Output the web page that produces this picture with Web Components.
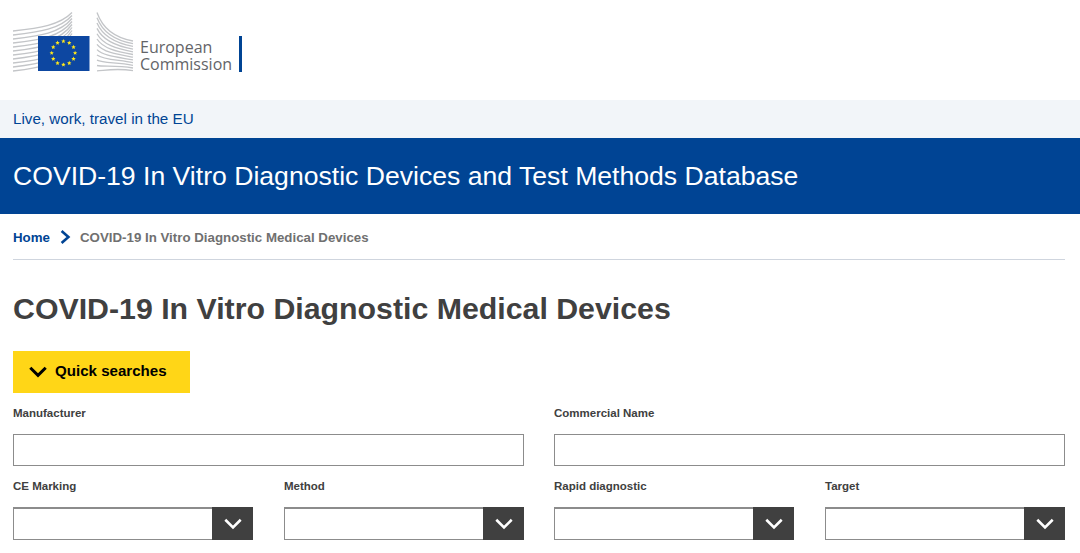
<!DOCTYPE html>
<html>
<head>
<meta charset="utf-8">
<style>
    html, body { margin: 0; padding: 0; background: #fff; overflow: hidden; }
    body { font-family: "Liberation Sans", Arial, sans-serif; color: #404040; }
</style>
</head>
<body>
<ec-header></ec-header>
<ec-topbar>Live, work, travel in the EU</ec-topbar>
<ec-banner>COVID-19 In Vitro Diagnostic Devices and Test Methods Database</ec-banner>
<ec-breadcrumb current="COVID-19 In Vitro Diagnostic Medical Devices">Home</ec-breadcrumb>
<ec-search>
    <ec-field slot="manufacturer" label="Manufacturer"></ec-field>
    <ec-field slot="commercial" label="Commercial Name"></ec-field>
    <ec-field slot="ce" label="CE Marking" type="select"></ec-field>
    <ec-field slot="method" label="Method" type="select"></ec-field>
    <ec-field slot="rapid" label="Rapid diagnostic" type="select"></ec-field>
    <ec-field slot="target" label="Target" type="select"></ec-field>
</ec-search>

<script>
const chevron = (color, width) => `<svg viewBox="0 0 18 12" width="18" height="12" aria-hidden="true"><path d="M1.3 1.8 9 9.4l7.7-7.6" fill="none" stroke="${color}" stroke-width="${width}"/></svg>`

function starPoints(cx, cy, r) {
    const pts = []
    for (let i = 0; i < 10; i++) {
        const a = -Math.PI / 2 + i * Math.PI / 5
        const d = i % 2 ? r * 0.45 : r
        pts.push((cx + d * Math.cos(a)).toFixed(2) + ',' + (cy + d * Math.sin(a)).toFixed(2))
    }
    return pts.join(' ')
}

function logoSvg() {
    let lines = ''
    // left wing, fans out to the top right behind the flag
    for (let i = 0; i < 11; i++) {
        const y0 = 31 + i * 4
        const y1 = 12.5 + i * 3
        lines += `<path d="M13 ${y0}C40 ${y0 - 3} 60 ${y0 - 6} 72 ${y1}"/>`
    }
    // right wing
    for (let i = 0; i < 12; i++) {
        const y0 = 12.5 + i * 5.3
        const y1 = 41 + i * 2.7
        lines += `<path d="M97 ${y0}C103 ${y0 + (y1 - y0) * 0.6} 116 ${y1 - 3} 133 ${y1}"/>`
    }
    let stars = ''
    for (let i = 0; i < 12; i++) {
        const a = i * Math.PI / 6
        stars += `<polygon points="${starPoints(63.4 + 11.7 * Math.sin(a), 53 - 11.7 * Math.cos(a), 2.3)}"/>`
    }
    return `<svg viewBox="0 0 140 84" width="140" height="84" aria-hidden="true">
        <g fill="none" stroke="#c3c5c8" stroke-width="1.3">${lines}</g>
        <rect x="38" y="36" width="51.5" height="35" fill="#0d47a1"/>
        <g fill="#ffe81a">${stars}</g>
    </svg>`
}

const headerPage = document.createElement('template')
headerPage.innerHTML = `
<style>
    :host { display: block; height: 100px; background: #fff; }
    .logo { display: flex; align-items: flex-start; }
    svg { display: block; }
    .name {
        margin-top: 36px;
        padding: 3px 7px 0 0;
        box-sizing: border-box;
        height: 36px;
        border-right: 3px solid #004494;
        font: 16px/17px "Open Sans", sans-serif;
        color: #636468;
    }
</style>
<div class="logo"><span class="mark"></span><div class="name">European<br>Commission</div></div>
`
class EcHeader extends HTMLElement {
    constructor() {
        super()
        this.attachShadow({ mode: "open" })
        this.shadowRoot.appendChild(headerPage.content.cloneNode(true))
        this.shadowRoot.querySelector('.mark').innerHTML = logoSvg()
    }
}

const topbarPage = document.createElement('template')
topbarPage.innerHTML = `
<style>
    :host {
        display: flex;
        align-items: center;
        height: 38px;
        padding: 0 13px 1px;
        box-sizing: border-box;
        background: #f2f5f9;
        color: #004494;
        font-size: 15.2px;
    }
</style>
<slot></slot>
`
class EcTopbar extends HTMLElement {
    constructor() {
        super()
        this.attachShadow({ mode: "open" })
        this.shadowRoot.appendChild(topbarPage.content.cloneNode(true))
    }
}

const bannerPage = document.createElement('template')
bannerPage.innerHTML = `
<style>
    :host {
        display: flex;
        align-items: center;
        height: 76px;
        padding: 0 13px;
        background: #004494;
        color: #fff;
        font-size: 26.6px;
    }
</style>
<slot></slot>
`
class EcBanner extends HTMLElement {
    constructor() {
        super()
        this.attachShadow({ mode: "open" })
        this.shadowRoot.appendChild(bannerPage.content.cloneNode(true))
    }
}

const breadcrumbPage = document.createElement('template')
breadcrumbPage.innerHTML = `
<style>
    :host { display: block; padding: 0 15px 0 13px; font-size: 13.3px; font-weight: bold; }
    .row {
        display: flex;
        align-items: center;
        padding-top: 1px;
        box-sizing: border-box;
        height: 46px;
        border-bottom: 1px solid #cfd5de;
    }
    .home { color: #004494; }
    svg { display: block; margin: 0 9px 0 10px; }
    .current { color: #707070; }
</style>
<div class="row">
    <span class="home"><slot></slot></span>
    <svg viewBox="0 0 11 14" width="11" height="14" aria-hidden="true"><path d="M1.6 1 8.4 7l-6.8 6" fill="none" stroke="#004494" stroke-width="2.6"/></svg>
    <span class="current"></span>
</div>
`
class EcBreadcrumb extends HTMLElement {
    constructor() {
        super()
        this.attachShadow({ mode: "open" })
        this.shadowRoot.appendChild(breadcrumbPage.content.cloneNode(true))
        this.shadowRoot.querySelector('.current').textContent = this.getAttribute('current')
    }
}

const fieldPage = document.createElement('template')
fieldPage.innerHTML = `
<style>
    :host { display: block; }
    label { display: block; height: 14px; line-height: 14px; font-size: 11.5px; font-weight: bold; color: #404040; }
    .box {
        display: flex;
        box-sizing: border-box;
        height: 32px;
        margin-top: 14px;
        border: 1px solid #8c8c8c;
        background: #fff;
    }
    :host([type="select"]) .box { height: 33px; border-top-width: 2px; }
    .arrow {
        display: none;
        flex: none;
        width: 41px;
        margin: -2px -1px -1px auto;
        align-items: center;
        justify-content: center;
        background: #404040;
    }
    :host([type="select"]) .arrow { display: flex; }
    svg { display: block; }
</style>
<label></label>
<div class="box"><div class="arrow">${chevron('#fff', 2.6)}</div></div>
`
class EcField extends HTMLElement {
    constructor() {
        super()
        this.attachShadow({ mode: "open" })
        this.shadowRoot.appendChild(fieldPage.content.cloneNode(true))
        this.shadowRoot.querySelector('label').textContent = this.getAttribute('label')
    }
}

const searchPage = document.createElement('template')
searchPage.innerHTML = `
<style>
    :host { display: block; padding: 0 15px 0 13px; }
    h1 { margin: 0; padding-top: 32px; height: 59px; line-height: 34px; font-size: 30.3px; font-weight: bold; color: #404040; box-sizing: content-box; }
    button {
        display: flex;
        align-items: center;
        gap: 8px;
        width: 177px;
        height: 42px;
        padding: 0 0 3px 16px;
        box-sizing: border-box;
        border: 0;
        background: #ffd617;
        color: #000;
        font: bold 15.1px "Liberation Sans", Arial, sans-serif;
    }
    svg { display: block; margin-top: 3px; }
    .fields { display: grid; grid-template-columns: 1fr 1fr; column-gap: 30px; row-gap: 13px; margin-top: 13px; }
    .pair { display: grid; grid-template-columns: 240px 240px; column-gap: 31px; }
</style>
<h1>COVID-19 In Vitro Diagnostic Medical Devices</h1>
<button type="button">${chevron('#000', 3)}Quick searches</button>
<div class="fields">
    <slot name="manufacturer"></slot>
    <slot name="commercial"></slot>
    <div class="pair"><slot name="ce"></slot><slot name="method"></slot></div>
    <div class="pair"><slot name="rapid"></slot><slot name="target"></slot></div>
</div>
`
class EcSearch extends HTMLElement {
    constructor() {
        super()
        this.attachShadow({ mode: "open" })
        this.shadowRoot.appendChild(searchPage.content.cloneNode(true))
    }
}

window.customElements.define('ec-header', EcHeader)
window.customElements.define('ec-topbar', EcTopbar)
window.customElements.define('ec-banner', EcBanner)
window.customElements.define('ec-breadcrumb', EcBreadcrumb)
window.customElements.define('ec-field', EcField)
window.customElements.define('ec-search', EcSearch)
</script>
</body>
</html>
